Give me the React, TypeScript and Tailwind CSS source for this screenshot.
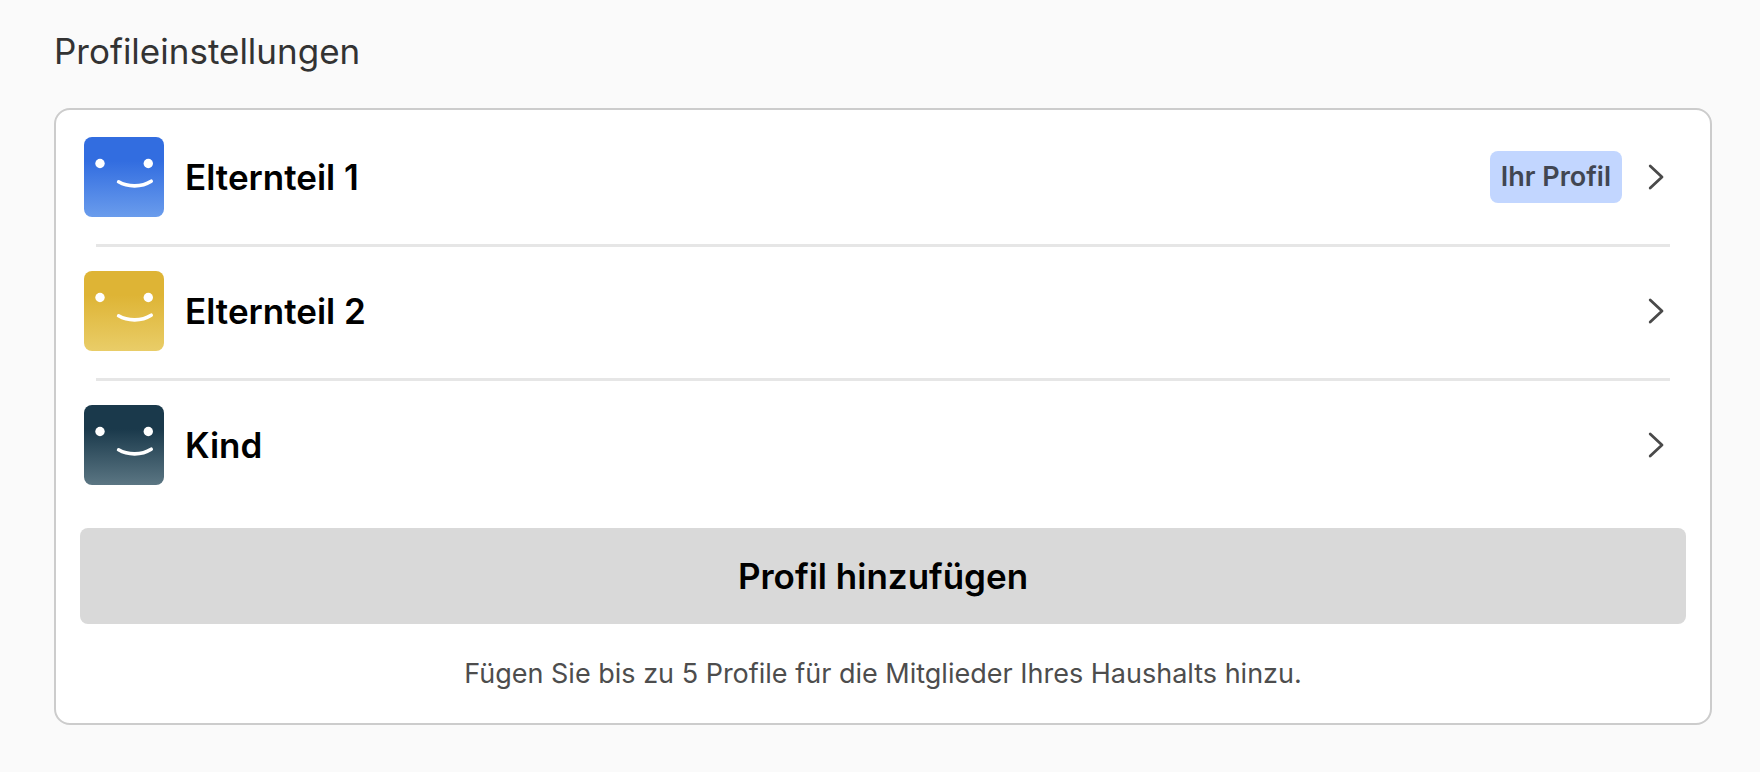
interface Profile {
  name: string;
  from: string;
  to: string;
  isCurrent?: boolean;
}

const profiles: Profile[] = [
  { name: 'Elternteil 1', from: '#326de0', to: '#6a9cec', isCurrent: true },
  { name: 'Elternteil 2', from: '#deb435', to: '#e9cd68' },
  { name: 'Kind', from: '#1a394b', to: '#5b7683' },
];

function Avatar({ id, from, to }: { id: string; from: string; to: string }) {
  return (
    <svg viewBox="0 0 80 80" className="size-20 shrink-0" aria-hidden="true">
      <defs>
        <linearGradient id={id} x1="0" y1="0" x2="0" y2="1">
          <stop offset="0.3" stopColor={from} />
          <stop offset="1" stopColor={to} />
        </linearGradient>
      </defs>
      <rect width="80" height="80" rx="8" fill={`url(#${id})`} />
      <circle cx="16" cy="26.5" r="4.7" fill="#fff" />
      <circle cx="64.3" cy="26.5" r="4.7" fill="#fff" />
      <path
        d="M34.6 44.8C44 50.3 57.5 50.3 67.2 44.2"
        fill="none"
        stroke="#fff"
        strokeWidth="3.6"
        strokeLinecap="round"
      />
    </svg>
  );
}

function Chevron() {
  return (
    <svg viewBox="0 0 16 26" className="h-[26px] w-4 shrink-0" aria-hidden="true">
      <path
        d="M2.2 2L14 13L2.2 24"
        fill="none"
        stroke="#4a4a4a"
        strokeWidth="2.8"
        strokeLinecap="round"
        strokeLinejoin="round"
      />
    </svg>
  );
}

function ProfileRow({ profile, index }: { profile: Profile; index: number }) {
  return (
    <li>
      <button
        type="button"
        className="flex w-full items-center pt-6 pr-[22px] pb-[27px] pl-1 text-left"
      >
        <Avatar id={`avatar-${index}`} from={profile.from} to={profile.to} />
        <span className="ml-[21px] flex-1 text-[35px] leading-[46px] font-semibold text-black">
          {profile.name}
        </span>
        {profile.isCurrent && (
          <span className="mr-[26px] rounded-lg bg-[#c2d6ff] px-[11px] text-[27px] leading-[52px] font-semibold text-[#414652]">
            Ihr Profil
          </span>
        )}
        <Chevron />
      </button>
      {index < profiles.length - 1 && <hr className="mx-4 border-t-3 border-[#e6e6e6]" />}
    </li>
  );
}

export default function App() {
  return (
    <main className="min-h-screen bg-[#fafafa] pt-7 pr-12 pb-12 pl-[54px] font-['Inter',sans-serif]">
      <h1 className="text-[35px] leading-[46px] text-[#333333]">Profileinstellungen</h1>

      <section className="mt-[34px] rounded-2xl border-2 border-[#cccccc] bg-white px-6 pt-[3px] pb-[27px]">
        <ul>
          {profiles.map((profile, index) => (
            <ProfileRow key={profile.name} profile={profile} index={index} />
          ))}
        </ul>

        <button
          type="button"
          className="mt-4 h-24 w-full rounded-lg bg-[#d9d9d9] text-[35px] leading-[46px] font-semibold text-black"
        >
          Profil hinzufügen
        </button>

        <p className="mt-7 text-center text-[27px] leading-11 text-[#4d4d4d]">
          Fügen Sie bis zu 5 Profile für die Mitglieder Ihres Haushalts hinzu.
        </p>
      </section>
    </main>
  );
}
